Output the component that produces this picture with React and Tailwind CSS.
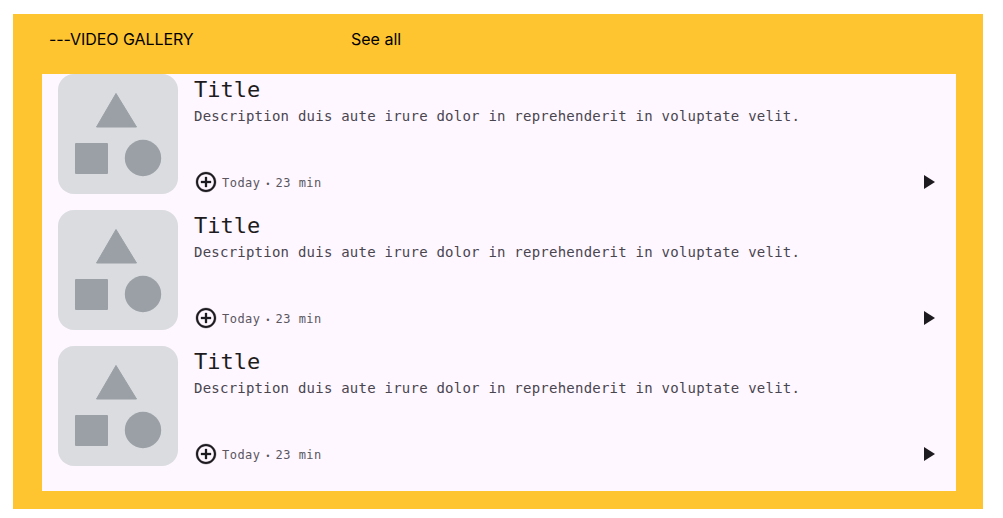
import { Fragment } from 'react';

const items = [1, 2, 3];

function Thumb() {
  return (
    <div className="w-[120px] h-[120px] shrink-0 rounded-2xl bg-[#dadce0] overflow-hidden">
      <svg width="120" height="120" viewBox="0 0 120 120" fill="#9aa0a6">
        <path d="M58 19.5 L38.5 53 L78.5 53 Z" stroke="#9aa0a6" strokeWidth="1" strokeLinejoin="round" />
        <rect x="17" y="69" width="33" height="31" rx="1" />
        <circle cx="85" cy="84" r="18.2" />
      </svg>
    </div>
  );
}

function Row() {
  return (
    <div className="flex h-[120px] gap-4">
      <Thumb />
      <div className="flex-1 flex flex-col min-w-0" style={{ fontFamily: '"DejaVu Sans Mono", monospace' }}>
        <div className="mt-[2px] text-[22px] leading-7 text-[#1d1b20]">Title</div>
        <div className="mt-[2px] text-sm leading-5 tracking-[0.23px] text-[#49454f]">
          Description duis aute irure dolor in reprehenderit in voluptate velit.
        </div>
        <div className="mt-auto flex items-center h-6">
          <svg width="24" height="24" viewBox="0 0 24 24" fill="#1d1b20" stroke="#1d1b20" strokeWidth="0.3">
            <path d="M13 7h-2v4H7v2h4v4h2v-4h4v-2h-4V7zm-1-5C6.48 2 2 6.48 2 12s4.48 10 10 10 10-4.48 10-10S17.52 2 12 2zm0 18c-4.41 0-8-3.59-8-8s3.59-8 8-8 8 3.590 8 8-3.590 8-8 8z" />
          </svg>
          <span className="ml-1 mt-1 text-xs leading-4 tracking-[0.48px] text-[#5a5660] whitespace-nowrap">
            Today<span className="inline-block w-[15px] text-center text-[8px] tracking-normal">•</span>23 min
          </span>
          <svg className="ml-auto" width="24" height="24" viewBox="0 0 24 24" fill="#1d1b20">
            <path d="M8 5v14l11-7z" />
          </svg>
        </div>
      </div>
    </div>
  );
}

export default function App() {
  return (
    <div className="ml-[13px] mt-[14px] w-[970px] h-[495px] bg-[#ffc531] pl-[29px] pr-[27px]" style={{ fontFamily: 'Inter, sans-serif' }}>
      <div className="h-[60px] pl-[7px] pb-[10px] flex items-center text-black text-base">
        <span className="w-[302px] shrink-0 tracking-[-0.06px]">---VIDEO GALLERY</span>
        <span>See all</span>
      </div>
      <div className="h-[417px] bg-[#fef7ff] pl-4 pr-4 flex flex-col gap-4">
        {items.map((i) => (
          <Fragment key={i}>
            <Row />
          </Fragment>
        ))}
      </div>
    </div>
  );
}
